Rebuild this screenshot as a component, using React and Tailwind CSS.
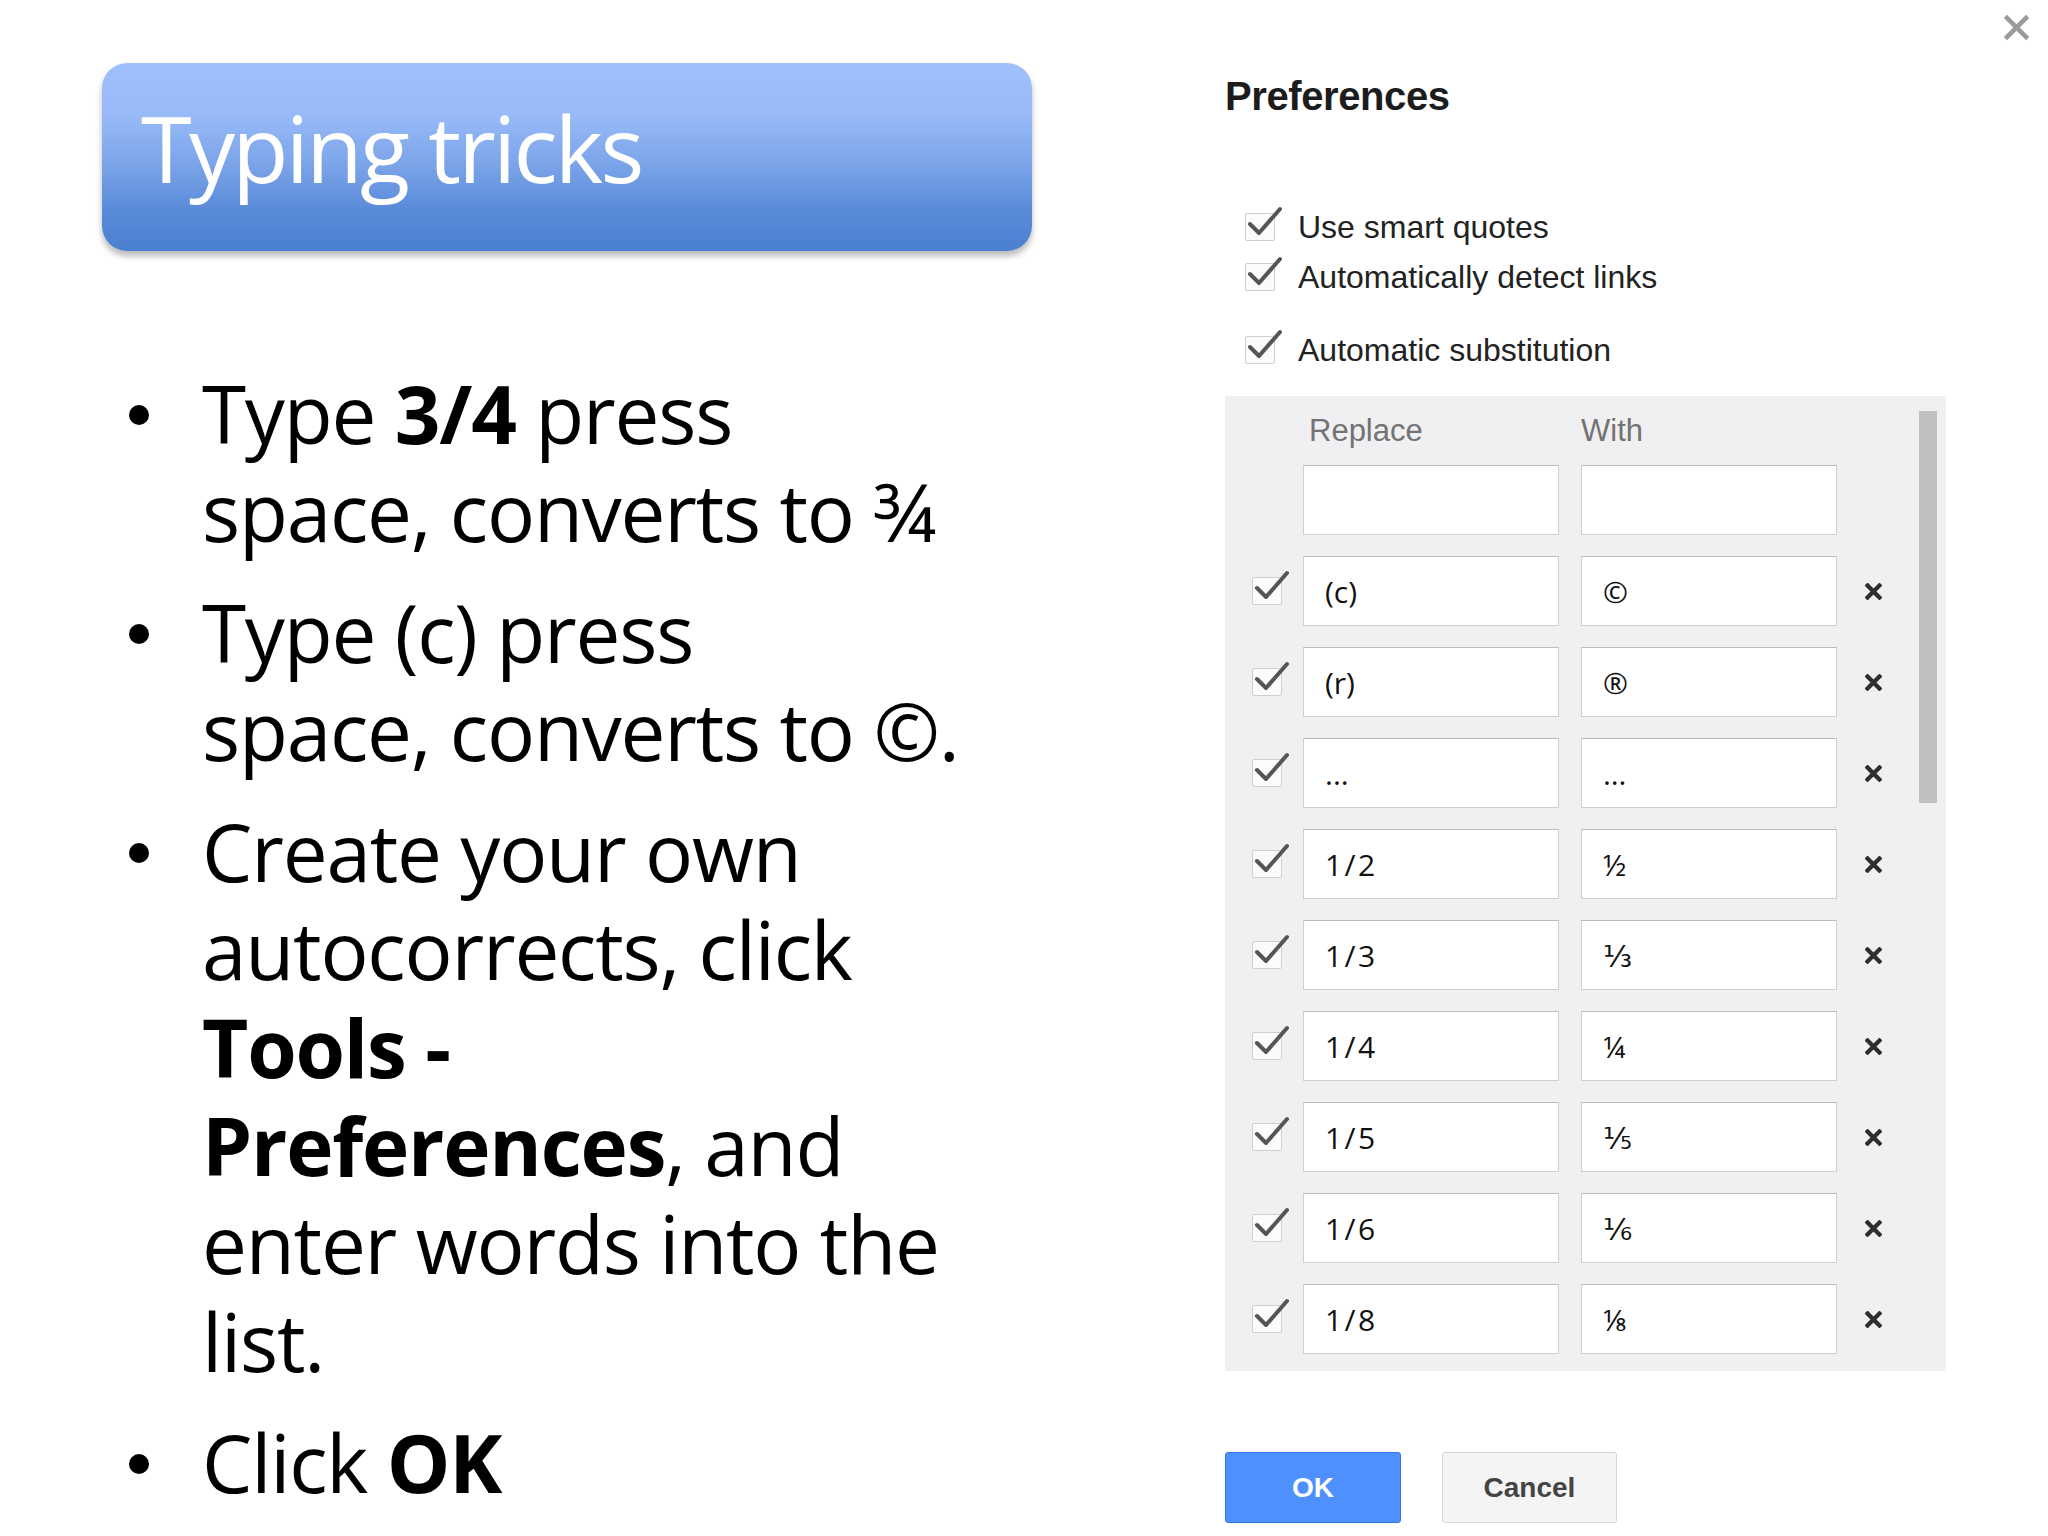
import React from "react";

const rows = [
  ["(c)", "©"],
  ["(r)", "®"],
  ["...", "…"],
  ["1/2", "½"],
  ["1/3", "⅓"],
  ["1/4", "¼"],
  ["1/5", "⅕"],
  ["1/6", "⅙"],
  ["1/8", "⅛"],
];

function Check() {
  return (
    <div className="relative w-[30px] h-[28px] shrink-0 border border-[#cfcfcf] bg-[#fbfbfb] rounded-[2px]">
      <svg
        className="absolute left-[-1px] top-[-8px]"
        width="40"
        height="36"
        viewBox="0 0 40 36"
      >
        <path
          d="M5 18 L14 27 L35 3"
          fill="none"
          stroke="#555"
          strokeWidth="4"
          strokeLinecap="round"
          strokeLinejoin="round"
        />
      </svg>
    </div>
  );
}

function XIcon({ size, color, width }) {
  return (
    <svg width={size} height={size} viewBox="0 0 20 20">
      <path
        d="M3 3 L17 17 M17 3 L3 17"
        stroke={color}
        strokeWidth={width}
        strokeLinecap="square"
      />
    </svg>
  );
}

function Bullet({ children, first }) {
  return (
    <li className={"flex " + (first ? "" : "mt-[23px]")}>
      <div className="w-[75px] shrink-0 pl-[2px] pt-[41px]">
        <div className="w-[20px] h-[20px] rounded-full bg-black" />
      </div>
      <div className="leading-[98px]">{children}</div>
    </li>
  );
}

export default function App() {
  return (
    <div className="relative w-[2048px] h-[1536px] bg-white overflow-hidden flex">
      {/* Left column */}
      <div className="w-[1123px] shrink-0 pl-[102px] pt-[63px] font-['Open_Sans',sans-serif] text-black">
        <div className="w-[930px] h-[188px] rounded-[25px] bg-[linear-gradient(180deg,#9ec0fb_0%,#98baf8_28%,#7aa3e8_55%,#5a8bd8_78%,#4a80d0_100%)] shadow-[0_5px_6px_rgba(0,0,0,0.28)] pl-[39px] pt-[39px]">
          <div className="text-[92px] leading-none tracking-[-0.03em] text-white whitespace-nowrap">
            Typing tricks
          </div>
        </div>
        <ul className="mt-[113px] pl-[25px] text-[80px] tracking-[-0.015em] whitespace-nowrap">
          <Bullet first>
            Type <b className="font-bold">3/4</b> press
            <br />
            space, converts to ¾
          </Bullet>
          <Bullet>
            Type (c) press
            <br />
            space, converts to ©.
          </Bullet>
          <Bullet>
            Create your own
            <br />
            autocorrects, click
            <br />
            <b className="font-bold">Tools -</b>
            <br />
            <b className="font-bold">Preferences</b>, and
            <br />
            enter words into the
            <br />
            list.
          </Bullet>
          <Bullet>
            Click <b className="font-bold">OK</b>
          </Bullet>
        </ul>
      </div>

      {/* Right column: Preferences dialog */}
      <div className="w-[721px] shrink-0 pt-[76px] pl-[102px] box-content font-['Liberation_Sans',Arial,sans-serif]">
        <div className="text-[40px] leading-none font-bold text-[#1c1c1c] tracking-[-0.01em]">
          Preferences
        </div>

        <div className="mt-[86px] pl-[20px] text-[32px] text-[#222]">
          <div className="h-[50px] flex items-center gap-[23px]">
            <Check />
            <span>Use smart quotes</span>
          </div>
          <div className="h-[50px] flex items-center gap-[23px]">
            <Check />
            <span>Automatically detect links</span>
          </div>
          <div className="h-[50px] mt-[23px] flex items-center gap-[23px]">
            <Check />
            <span>Automatic substitution</span>
          </div>
        </div>

        {/* Substitution table */}
        <div className="mt-[21px] w-[721px] h-[975px] bg-[#f0eff1] flex">
          <div className="flex-1 pt-[15px] pl-[27px]">
            <div className="h-[40px] flex items-center text-[31px] text-[#737373]">
              <div className="w-[51px]" />
              <div className="w-[278px] pl-[6px]">Replace</div>
              <div>With</div>
            </div>
            <div className="mt-[14px] flex flex-col gap-[21px]">
              <div className="h-[70px] flex items-center">
                <div className="w-[30px]" />
                <div className="w-[256px] h-[70px] ml-[21px] bg-white border border-[#cfcfcf] border-t-[#bcbcbc]" />
                <div className="w-[256px] h-[70px] ml-[22px] bg-white border border-[#cfcfcf] border-t-[#bcbcbc]" />
              </div>
              {rows.map(([a, b]) => (
                <div key={a} className="h-[70px] flex items-center">
                  <Check />
                  <div
                    className={
                      "w-[256px] h-[70px] ml-[21px] bg-white border border-[#cfcfcf] border-t-[#bcbcbc] flex items-center pl-[21px] font-['Open_Sans','DejaVu_Sans',sans-serif] text-[30px] text-[#111] " +
                      (a.includes("/") ? "tracking-[0.08em]" : "tracking-normal")
                    }
                  >
                    {a}
                  </div>
                  <div className="w-[256px] h-[70px] ml-[22px] bg-white border border-[#cfcfcf] border-t-[#bcbcbc] flex items-center pl-[21px] font-['Open_Sans','DejaVu_Sans',sans-serif] text-[30px] text-[#111]">
                    {b}
                  </div>
                  <div className="ml-[28px]">
                    <XIcon size={17} color="#2e2e2e" width={5} />
                  </div>
                </div>
              ))}
            </div>
          </div>
          <div className="w-[18px] mr-[9px] pt-[15px]">
            <div className="w-[18px] h-[392px] bg-[#c0bfc1]" />
          </div>
        </div>

        {/* Buttons */}
        <div className="mt-[81px] flex gap-[41px]">
          <div className="w-[176px] h-[71px] rounded-[3px] bg-[#4d90fe] border border-[#3079ed] flex items-center justify-center text-[28px] font-bold text-white">
            OK
          </div>
          <div className="w-[175px] h-[71px] rounded-[3px] bg-[#f4f4f4] border border-[#d6d6d6] flex items-center justify-center text-[28px] font-bold text-[#444]">
            Cancel
          </div>
        </div>
      </div>

      {/* Close button */}
      <div className="absolute top-[14px] right-[18px]">
        <XIcon size={27} color="#9a9a9a" width={3.4} />
      </div>
    </div>
  );
}
